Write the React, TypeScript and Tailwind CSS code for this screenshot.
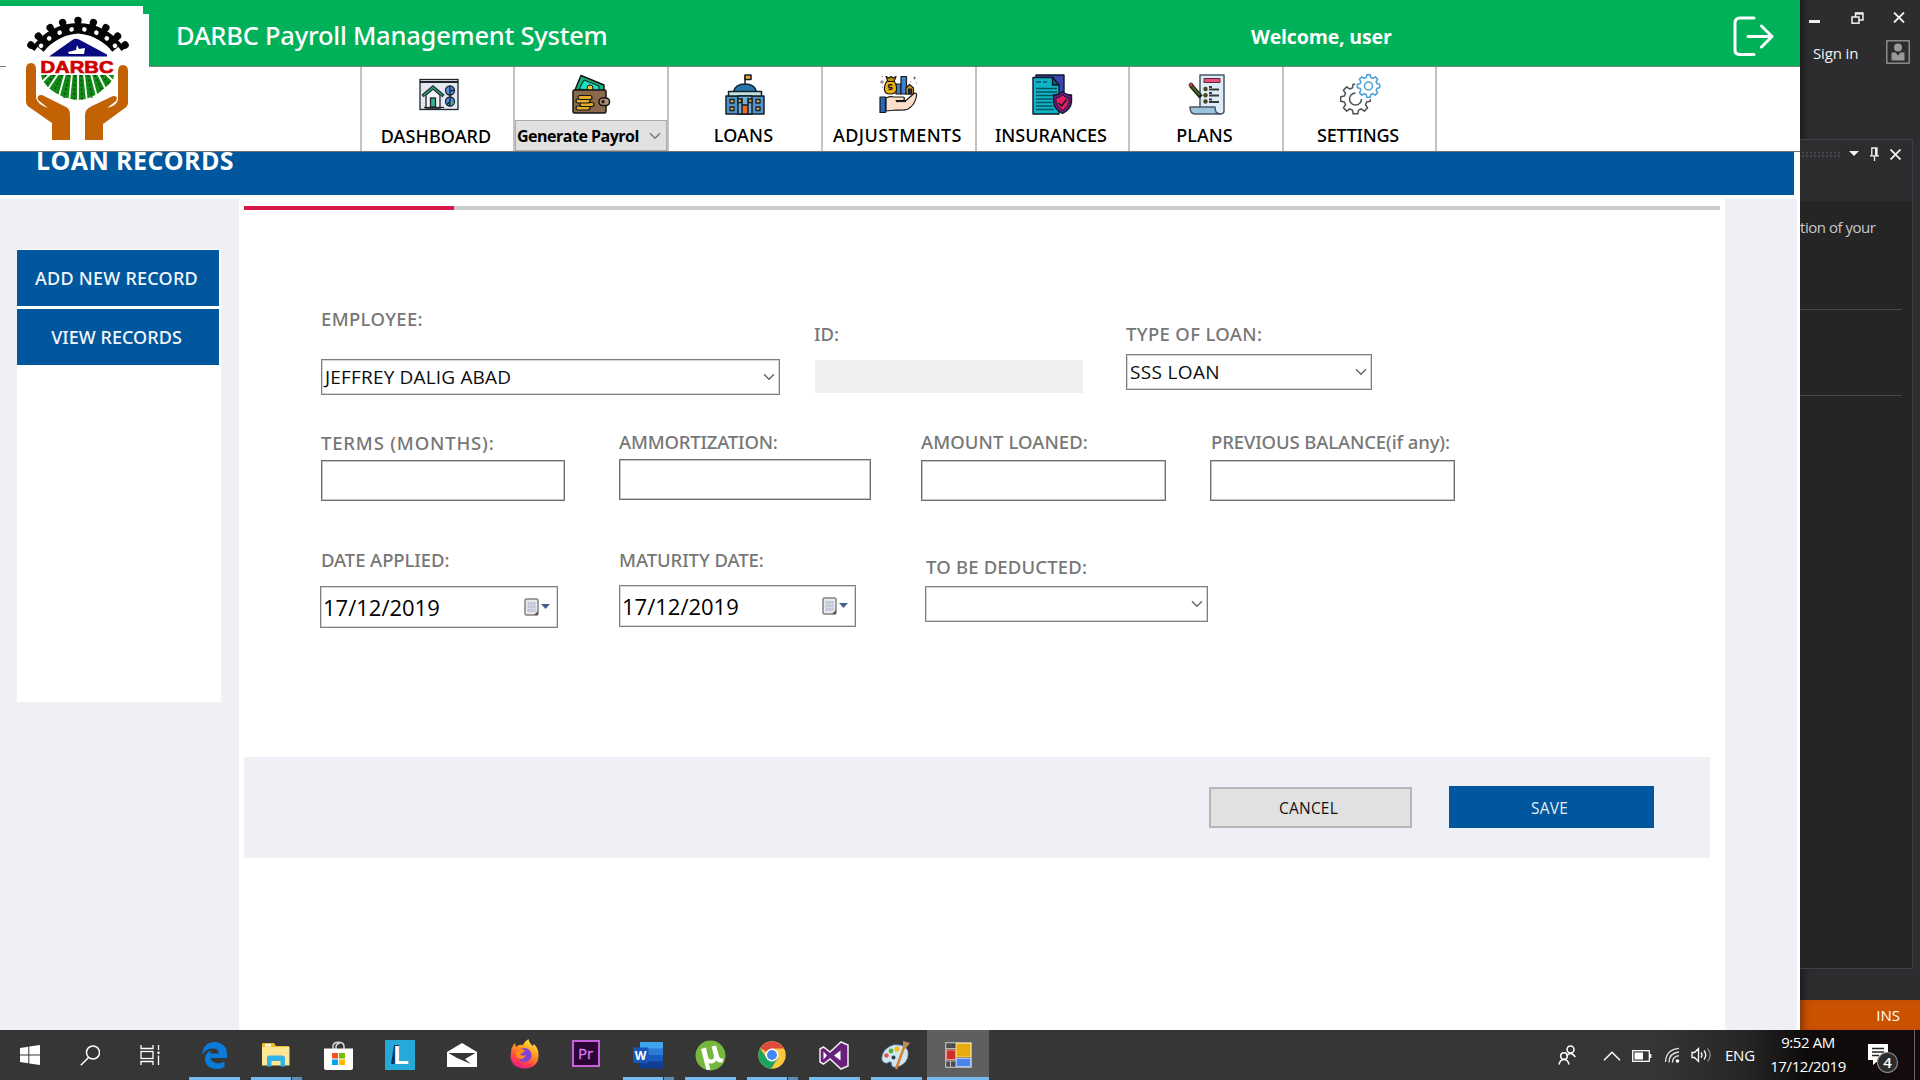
import type { ReactNode } from "react";

const BLUE = "bg-[#00579d]";

function Logo() {
  const teeth = [-55, -43.5, -29, -15.5, 0, 15.5, 29, 43.5, 55];
  return (
    <svg width="104" height="126" viewBox="0 0 104 126">
      <path d="M13 34 A49.500 49.500 0 0 1 91 34" fill="none" stroke="#050505" strokeWidth="12" />
      {teeth.map((a) => (
        <g key={a} transform={`rotate(${a} 52 64)`}>
          <rect x="49.200" y="5" width="5.600" height="8" fill="#050505" />
          <circle cx="52" cy="6.500" r="3.700" fill="#050505" />
        </g>
      ))}
      {[-49, -36, -22, -7.5, 7.5, 22, 36, 49].map((a) => (
        <circle key={a} cx="52" cy="15" r="2.300" fill="#fff" transform={`rotate(${a} 52 64)`} />
      ))}
      <path d="M18 46 Q24 22 52 19.500 Q80 22 86 46 Z" fill="#fff" />
      <path d="M23 42.500 L47 25.500 Q50 24 53 25.500 L81 40.500 V42.500 Z" fill="#0a0a80" />
      <path d="M51 31 l2 4 6-1 -1 6 -15 0 -1-2 8-2z" fill="#fff" />
      <text x="14.500" y="58.500" fontFamily="Liberation Sans" fontWeight="700" fontSize="16.500" textLength="73" lengthAdjust="spacingAndGlyphs" fill="#d00000" stroke="#d00000" strokeWidth=".7">DARBC</text>
      <path d="M15 61 H88 Q88 66 80 73 Q66 86 52 86 Q36 85 24 75 Q16 68 15 61Z" fill="#128a17" />
      <g stroke="#fff" strokeWidth="1.800" fill="none">
        <path d="M24 60 L16 68 M32 60 L22 75 M39 60 L33 82 M46 60 L43 88 M52 60 V88 M58 60 L61 88 M65 60 L71 83 M72 60 L80 76 M80 60 L89 69" />
      </g>
      <g stroke="#063d08" strokeWidth="1.200" strokeDasharray="2 2.500" fill="none">
        <path d="M20 61 l-2 3 M28 61 L20 71 M36 61 L28 77 M43 61 L38 84 M49 61 L48 86 M55 61 L56 86 M62 61 L66 84 M69 61 L76 77 M76 61 L84 71" />
      </g>
      <g fill="#c26205">
        <path d="M0 55 Q0 49 5 49 Q10 49 10 55 V84 Q12 91 22 94 L12 86 Q10 81 16 81 L38 92 Q44 94 44 100 V126 H26 V109 L3 93 Q0 91 0 87 Z" />
        <path d="M102 57 Q102 51 97 51 Q92 51 92 57 V86 Q90 92 81 94 L90 87 Q93 82 87 82 L66 92 Q59 95 59 101 V126 H77 V110 L99 94 Q102 92 102 88 Z" />
      </g>
    </svg>
  );
}

function DashboardIcon() {
  return (
    <svg width="40" height="41" viewBox="0 0 40 41" stroke="#20242c" strokeWidth="1.300">
      <rect x="1" y="5.500" width="38" height="30" fill="#e4e8f0" />
      <path d="M1 8 H39" strokeWidth="1.800" />
      <path d="M7 34 V21 L14 15 L21 21 V34 Z" fill="#f1f3f7" />
      <path d="M3.500 22 L14 13 L24.500 22" fill="none" strokeWidth="3.200" />
      <path d="M4.500 21.500 L14 13.500 L23.500 21.500" fill="none" stroke="#2fa67c" strokeWidth="1.400" />
      <rect x="11.500" y="24" width="5" height="9" fill="#2fb58a" />
      <path d="M5 33.500 H25" />
      <circle cx="31" cy="16.500" r="4.500" fill="#4a8fe0" />
      <circle cx="31" cy="27.500" r="4.500" fill="#4a8fe0" />
      <path d="M31 12 V32 M31 16.500 H35.500 M31 27.500 L28 30.500" />
      <path d="M31.500 28 h3.500 a4 4 0 0 1 -3 3.500z" fill="#2fb58a" stroke="none" />
    </svg>
  );
}

function WalletIcon() {
  return (
    <svg width="40" height="41" viewBox="0 0 40 41" stroke="#151515" strokeWidth="1.500" strokeLinejoin="round">
      <path d="M4 16 L10 1.500 L33 11 V17 Z" fill="#13b57f" />
      <path d="M8 15 L13 6 L28 12 V17 Z" fill="#19e0c5" strokeWidth="1" />
      <circle cx="19" cy="14" r="3" fill="#f5c02e" strokeWidth="1" />
      <rect x="2" y="16" width="33" height="23" rx="1.500" fill="#8a6a4b" />
      <rect x="28" y="24" width="10.500" height="7.500" rx="3.500" fill="#b08f72" />
      <circle cx="32" cy="27.700" r="1" fill="#eee" />
      <g fill="#e3aa2b" strokeWidth="1.200">
        <rect x="5" y="32" width="14" height="4" rx="2" />
        <rect x="9" y="28.500" width="14" height="4" rx="2" />
        <rect x="5" y="25" width="14" height="4" rx="2" />
        <rect x="7" y="21.500" width="14" height="4" rx="2" />
      </g>
    </svg>
  );
}

function LoansIcon() {
  return (
    <svg width="40" height="41" viewBox="0 0 40 41" stroke="#14202c" strokeWidth="1.500" strokeLinejoin="round">
      <path d="M20 11 V1.500" />
      <rect x="20" y="1" width="6" height="4.500" fill="#f0a72c" />
      <path d="M8.500 18 Q10 10 20 10 Q30 10 31.500 18 Z" fill="#2676ad" />
      <rect x="1" y="22" width="38" height="18" fill="#5493c7" />
      <rect x="3.500" y="17.500" width="33" height="4.500" fill="#bfe2df" />
      <rect x="13" y="22" width="14" height="18" fill="#74add6" />
      <path d="M17 24 V31 M23 24 V31" />
      <rect x="17" y="31" width="6" height="9" fill="#ef6b2a" />
      <g fill="#f4b53a" strokeWidth="1.300">
        <rect x="5" y="25.500" width="4" height="3.500" /><rect x="31" y="25.500" width="4" height="3.500" />
        <rect x="5" y="33" width="4" height="3.500" /><rect x="31" y="33" width="4" height="3.500" />
        <rect x="13" y="25" width="3.500" height="3.500" /><rect x="23.500" y="25" width="3.500" height="3.500" />
      </g>
    </svg>
  );
}

function AdjustmentsIcon() {
  return (
    <svg width="40" height="41" viewBox="0 0 40 41" stroke="#1a1a1a" strokeWidth="1.200" strokeLinejoin="round">
      <rect x="17" y="10" width="5" height="10" fill="#3d7fd0" />
      <rect x="22" y="2.500" width="5.500" height="17.500" fill="#3d7fd0" />
      <path d="M8 7 Q5 11 5.500 16 Q6 20 11 20 Q17 20 17.500 16 Q18 11 15 7 Z" fill="#eab010" />
      <path d="M7 2.500 l3 1.500 2-1.500 2 1.500 3-1.500 -2 5 H9z" fill="#c8900b" />
      <path d="M13.500 11 q-4-1 -4 1 t3 1.500 q2 2 -3 2" fill="none" strokeWidth="1.400" />
      <path d="M27 14 L30.500 10.500 L34.500 14 V20 H27z" fill="#d79a25" />
      <rect x="29.500" y="15" width="3" height="5" fill="#303030" />
      <path d="M7 24 Q11 22 15 23 H24 Q27 24 24 26.500 H17 H27 L35 19.500 Q38 18 37.500 22 Q36 31 29 35 Q26 36.500 17 36 L7 37 Z" fill="#fddfcc" />
      <path d="M17 27.500 H27" />
      <rect x="1" y="23" width="5.500" height="15.500" fill="#2a68b3" />
      <g stroke="#777" strokeWidth="1"><path d="M1 8 h4 M3 6 v4 M34 4 h3 M35.500 2.500 v3 M3 2.500 h1 M37 9 h1 M31 8 h1 M3 13 h1" /></g>
    </svg>
  );
}

function InsurancesIcon() {
  return (
    <svg width="41" height="41" viewBox="0 0 41 41" stroke="#0d1a26" strokeWidth="1.400" strokeLinejoin="round">
      <path d="M4 4 V1 H32 V30 H20Z" fill="#3a45ae" />
      <path d="M1 3.500 H20.500 L27 11 V40 H1 Z" fill="#0fb4c9" />
      <path d="M20.500 3.500 V11 H27 Z" fill="#12647d" />
      <path d="M4 8 h5 M11 8 h4 M4 14.500 h21 M4 18 h21 M4 21.500 h18 M4 25 h16 M4 28.500 h16 M4 32 h17 M4 35.500 h18" stroke="#0a5360" strokeWidth="1.500" />
      <path d="M30.500 17.500 Q34 21 39.500 21 V28 Q39 35 30.500 39.500 Q22 35 21.500 28 V21 Q27 21 30.500 17.500Z" fill="#6d1b86" />
      <path d="M30.500 21 Q33 23.500 37 24 V28 Q36 33 30.500 36.500 Q25 33 24 28 V24 Q28 23.500 30.500 21Z" fill="#ec1c64" strokeWidth="1" />
      <path d="M26.500 29 L29.500 32 L35 25" fill="none" strokeWidth="1.500" />
    </svg>
  );
}

function PlansIcon() {
  return (
    <svg width="40" height="41" viewBox="0 0 40 41" stroke="#4b5563" strokeWidth="1.500" strokeLinejoin="round">
      <path d="M13 1 H37 V37 Q37 40 33 40 L13 35 Z" fill="#dcecf9" />
      <path d="M3 33 H28 Q28 40 33 40 H8 Q3 40 3 33Z" fill="#9cc4e0" />
      <rect x="17" y="4.500" width="16" height="4" fill="#ef5083" stroke="#60263b" strokeWidth="1" />
      <g stroke="#3b3b3b" strokeWidth="1.800"><path d="M22 15.500 h10 M22 21.500 h10 M22 28 h10 M22 13 h3 M22 19 h3 M22 25.500 h3" /></g>
      <g fill="#4d421c" stroke="none"><circle cx="18.500" cy="15" r="2.200" /><circle cx="18.500" cy="21.200" r="2.200" /><circle cx="18.500" cy="27.500" r="2.200" /></g>
      <path d="M4 11.500 L14 23" stroke="#1e2a12" strokeWidth="4.500" />
      <path d="M5 12.500 L12.500 21" stroke="#44652a" strokeWidth="2" />
      <circle cx="4" cy="11" r="2" fill="#d33f63" stroke="#3d1420" strokeWidth=".8" />
    </svg>
  );
}

function gearPath(cx: number, cy: number, inner: number, outer: number, n: number) {
  const out: string[] = [];
  const step = (Math.PI * 2) / n;
  const offsets: [number, number][] = [[-0.34, inner], [-0.2, outer], [0.2, outer], [0.34, inner]];
  for (let i = 0; i < n; i++) {
    for (const [d, r] of offsets) {
      const a = i * step + d * step;
      out.push(`${(cx + r * Math.sin(a)).toFixed(2)} ${(cy - r * Math.cos(a)).toFixed(2)}`);
    }
  }
  return `M${out.join("L")}Z`;
}

function SettingsIcon() {
  return (
    <svg width="41" height="41" viewBox="0 0 41 41" fill="none" strokeWidth="1.500" strokeLinejoin="round">
      <path d={gearPath(15.5, 25, 11.5, 15, 8)} stroke="#4e5055" />
      <path d="M15.500 19 a6 6 0 1 0 6 6" stroke="#4e5055" />
      <circle cx="28" cy="12.500" r="13" fill="#fff" />
      <path d={gearPath(28.5, 12, 8.8, 11.3, 8)} stroke="#4a9ed6" />
      <circle cx="28.500" cy="12" r="4" stroke="#4a9ed6" />
    </svg>
  );
}

function Chevron({ w = 12, color = "#666" }: { w?: number; color?: string }) {
  return (
    <svg width={w} height="8" viewBox="0 0 12 8" fill="none" stroke={color} strokeWidth="1.400" preserveAspectRatio="none">
      <path d="M1 1.300 L6 6.300 L11 1.300" />
    </svg>
  );
}

function NavCell({ icon, label, tracking, width, iconPad = "pl-[3px]", gap = "mt-[8px]" }: { icon: ReactNode; label: string; tracking: string; width: string; iconPad?: string; gap?: string }) {
  return (
    <div className={`flex h-[84px] shrink-0 flex-col items-center border-l-2 border-[#c3c3c3] pt-[7px] pr-[3px] ${width}`}>
      <div className={iconPad}>{icon}</div>
      <span className={`font-['Noto_Sans',sans-serif] text-[18px] leading-6 font-medium whitespace-nowrap text-black ${gap} ${tracking}`}>{label}</span>
    </div>
  );
}

function Field({ label, tracking, className, children, gap }: { label: string; tracking: string; className: string; gap: string; children: ReactNode }) {
  return (
    <div className={`flex shrink-0 flex-col items-start ${className}`}>
      <label className={`ml-px h-6 whitespace-nowrap font-['Noto_Sans',sans-serif] text-[18.500px] leading-6 font-medium text-[#777] ${tracking} ${gap}`}>{label}</label>
      {children}
    </div>
  );
}

function SelectBox({ className, value = "", tracking = "" }: { className: string; value?: string; tracking?: string }) {
  return (
    <div className={`flex items-center justify-between border border-[#7e7e7e] bg-white pr-[4px] pl-[3px] outline outline-1 -outline-offset-2 outline-[#d6d6d6] ${className}`}>
      <span className={`-mt-px whitespace-nowrap text-[19px] leading-6 text-[#0c0c0c] ${tracking}`}>{value}</span>
      <Chevron />
    </div>
  );
}

function TextBox({ className }: { className: string }) {
  return <div className={`border border-[#6e6e6e] bg-white outline outline-1 -outline-offset-2 outline-[#c4c4c4] ${className}`} />;
}

function DateBox({ className }: { className: string }) {
  return (
    <div className={`flex h-[42px] items-center border border-[#7e7e7e] bg-white pr-[6px] pl-[2px] outline outline-1 -outline-offset-2 outline-[#d6d6d6] ${className}`}>
      <span className="flex-1 text-[22px] leading-7 text-black">17/12/2019</span>
      <svg width="27" height="18" viewBox="0 0 27 18" className="-mt-px">
        <rect x="1" y="1" width="13" height="16" rx="1.500" fill="#e9e9ec" stroke="#85817f" strokeWidth="1.500" />
        <rect x="3.500" y="4" width="8" height="10" fill="#bcc4d6" />
        <path d="M3.500 7h8M3.500 10.500h8M6 4v10M9 4v10" stroke="#e6eaf2" strokeWidth=".6" />
        <path d="M10 17 L14 13 V17Z" fill="#555" />
        <path d="M17 6 H26 L21.500 11Z" fill="#44608f" />
      </svg>
    </div>
  );
}

function Slot({ children, w = "w-[62px]", line = "", active = false }: { children: ReactNode; w?: string; line?: "" | "full" | "split" | "wide"; active?: boolean }) {
  return (
    <div className={`flex h-[50px] shrink-0 flex-col items-center ${w} ${active ? "bg-[#5f5f5f]" : ""}`}>
      <div className="flex h-[47px] items-center justify-center pt-[3px]">{children}</div>
      {line === "full" && <div className="h-[3px] w-[51px] bg-[#76b9ed]" />}
      {line === "wide" && <div className="h-[3px] w-full bg-[#76b9ed]" />}
      {line === "split" && (
        <div className="flex h-[3px] w-[51px] gap-px">
          <div className="w-10 bg-[#76b9ed]" />
          <div className="flex-1 bg-[#5b8db8]" />
        </div>
      )}
    </div>
  );
}

function Taskbar() {
  return (
    <footer className="flex h-[50px] w-full shrink-0 bg-[linear-gradient(90deg,#363636_0%,#363636_86%,#262525_91%,#0e0b0b_94%,#140b0c_100%)]">
      <Slot w="w-[60px]">
        <svg width="20" height="20" viewBox="0 0 20 20" fill="#fff"><path d="M0 3 L8.300 1.800 V9.500 H0Z M9.300 1.600 L20 0 V9.500 H9.300Z M0 10.500 H8.300 V18.200 L0 17Z M9.300 10.500 H20 V20 L9.300 18.400Z" /></svg>
      </Slot>
      <Slot w="w-[60px]">
        <svg width="20" height="21" viewBox="0 0 20 21" fill="none" stroke="#fff" strokeWidth="1.500"><circle cx="13" cy="7.500" r="6.500" /><path d="M8.500 12.500 L.8 20.200" /></svg>
      </Slot>
      <Slot w="w-[60px]">
        <svg width="20" height="20" viewBox="0 0 20 20" fill="none" stroke="#fff" strokeWidth="1.300"><path d="M1 0 V3.500 H13 V0 M1 20 V16.500 H13 V20 M18.500 0 V5 M18.500 10.500 V20" /><rect x="1" y="6.500" width="12" height="7" /><rect x="17.500" y="6.500" width="2" height="2.500" fill="#fff" stroke="none" /></svg>
      </Slot>
      <div className="w-[3px] shrink-0" />
      <Slot line="full">
        <svg width="25" height="27" viewBox="0 0 25 27"><path d="M0 12.500 C1 4 6 0 13 0 C21 0 25 6 25 12 V16 H8.500 C9 21 17 23 22.500 19.500 V25 C15 29 3 27 3 17 C3 12.500 6 9.500 9.500 8 C8.500 9.500 8.300 11 8.300 11.500 H17 C17 5 6 4 0 12.500Z" fill="#0a7bd8" /></svg>
      </Slot>
      <Slot line="split">
        <svg width="28" height="24" viewBox="0 0 28 24"><path d="M0 1 Q0 0 1 0 H12 L14 3 H27 V7 H0Z" fill="#f0b92f" /><rect x="3" y="1.200" width="6" height="2.200" fill="#fff" /><rect y="4" width="27.500" height="18.500" fill="#ffe694" /><path d="M5 23.500 V15 Q5 12.500 7.500 12.500 H20 Q23 12.500 23 15 V23.500 H18.500 V18 H9.500 V23.500Z" fill="#34b1e5" /></svg>
      </Slot>
      <Slot>
        <svg width="29" height="29" viewBox="0 0 29 29"><path d="M9 9 V5.500 Q9 1.200 14.500 1.200 Q20 1.200 20 5.500 V9 M12 9 V6 Q12 3 16 2" fill="none" stroke="#d8d8d8" strokeWidth="1.500" /><path d="M0 7.500 H29 V27 Q29 29 27 29 H2 Q0 29 0 27Z" fill="#fff" /><rect x="8" y="12" width="6" height="5.500" fill="#f25022" /><rect x="15" y="12" width="6" height="5.500" fill="#7fba00" /><rect x="8" y="18.500" width="6" height="5.500" fill="#00a4ef" /><rect x="15" y="18.500" width="6" height="5.500" fill="#ffb900" /></svg>
      </Slot>
      <Slot>
        <svg width="30" height="30" viewBox="0 0 30 30" className="-mt-px"><rect width="30" height="30" fill="#24a9d8" /><path d="M9 5 L6 24 L12 24 L14 5Z" fill="#0a3767" /><text x="8.500" y="23.500" fontFamily="Liberation Sans" fontWeight="700" fontSize="25" fill="#fff">L</text></svg>
      </Slot>
      <Slot>
        <svg width="30" height="24" viewBox="0 0 30 24"><path d="M0 9 L15 0 L30 9 V24 H0Z" fill="#fff" /><path d="M1.500 10 L28.500 10 L18 16 L24 21 L10 15Z" fill="#363636" /></svg>
      </Slot>
      <Slot>
        <svg width="29" height="30" viewBox="0 0 29 30" className="-mt-[2px]">
          <defs><linearGradient id="fx" x1=".8" y1="0" x2=".3" y2="1"><stop offset="0" stopColor="#fff14a" /><stop offset=".4" stopColor="#ff9a1f" /><stop offset=".8" stopColor="#ff3850" /><stop offset="1" stopColor="#e3198c" /></linearGradient></defs>
          <path d="M1 14 Q1 8 5 4 L6 8 Q9 5 13 6 Q15 2 18.500 0 Q19 4 23 7 L24 5 Q29 10 28.500 17 Q28 29 14.500 29.500 Q1 29 .5 17Z" fill="url(#fx)" />
          <circle cx="14.500" cy="16" r="7" fill="#8043d8" /><path d="M6 12 Q10 9 15 11 Q14 14 10 15 Q12 18 16 16 Q13 22 8 19 Q5 16 6 12Z" fill="#ff8a1d" />
        </svg>
      </Slot>
      <Slot>
        <svg width="28" height="27" viewBox="0 0 28 27" className="-mt-[3px]"><rect x="1" y="1" width="26" height="25" fill="#2a0634" stroke="#d767f0" strokeWidth="1.800" /><text x="6" y="18.500" fontFamily="Open Sans" fontSize="15" fill="#dd7cf5" stroke="#dd7cf5" strokeWidth=".3">Pr</text></svg>
      </Slot>
      <Slot line="split">
        <svg width="30" height="27" viewBox="0 0 30 27"><rect x="7" width="23" height="7" fill="#41a5ee" /><rect x="7" y="6.500" width="23" height="7" fill="#2b7cd3" /><rect x="7" y="13" width="23" height="7" fill="#185abd" /><rect x="7" y="19.500" width="23" height="7" fill="#103f91" /><rect y="5.500" width="15.500" height="15.500" rx="1" fill="#1857b8" /><text x="1.700" y="17.800" fontFamily="Open Sans" fontWeight="700" fontSize="12" fill="#fff">W</text></svg>
      </Slot>
      <Slot line="full">
        <svg width="31" height="31" viewBox="0 0 31 31"><circle cx="15.500" cy="15.500" r="15" fill="#76b83f" /><path d="M6 9 L11 7.500 L13 17 Q14.500 21 18 19 Q19.500 18 18.500 14 L16.500 6.500 L21 5.500 L24 16 Q25 19.500 28.500 18.500 L27.500 22 Q23 23.500 21.500 20.500 Q18 25 13.500 23 L15.500 29.500 L11.500 30 Z" fill="#fff" /></svg>
      </Slot>
      <Slot line="split">
        <svg width="28" height="28" viewBox="0 0 28 28"><circle cx="14" cy="14" r="13.700" fill="#fbc940" /><path d="M14 14 L2.300 7 A13.700 13.700 0 0 1 26 7.500 H14Z" fill="#dd4b3e" /><path d="M2.100 7.200 A13.700 13.700 0 0 0 13 27.700 L20 17 L8.500 17Z" fill="#1da362" /><circle cx="14" cy="14" r="6.500" fill="#fff" /><circle cx="14" cy="14" r="5" fill="#4587f3" /></svg>
      </Slot>
      <Slot line="full">
        <svg width="30" height="29" viewBox="0 0 30 29"><path d="M1 8 L4.500 6 L11 11 L22 1 L29 4 V25 L22 28 L11 18 L4.500 23 L1 21Z" fill="#68217a" stroke="#f1ecf3" strokeWidth="1.500" /><path d="M4.500 10.500 L8 14.500 L4.500 18.500Z M15 14.500 L21.500 9.500 V19.500Z" fill="#fff" /></svg>
      </Slot>
      <Slot line="full">
        <svg width="30" height="30" viewBox="0 0 30 30"><path d="M1 18 Q2 8 13 5 Q26 4 27 13 Q27 25 14 27 Q10 27 11 23 Q9 20 6 23 Q1 23 1 18Z" fill="#cfe6f3" stroke="#8bb8d6" strokeWidth=".8" /><circle cx="5.500" cy="15.500" r="2.200" fill="#e5533d" /><circle cx="10" cy="11" r="2.400" fill="#5dab3d" /><circle cx="16" cy="9" r="2.600" fill="#f3bb1c" /><circle cx="12.500" cy="17.500" r="2" fill="#2c3d4a" /><path d="M15 29 L23.500 6" stroke="#d9822b" strokeWidth="2.500" /><path d="M22 1 L29 3 L25 8 L22 6.500Z" fill="#b98d5c" /></svg>
      </Slot>
      <Slot line="wide" active>
        <svg width="27" height="26" viewBox="0 0 27 26"><rect x=".7" y=".7" width="25.600" height="24.600" fill="#4c4c4c" stroke="#bcbcbc" strokeWidth="1.200" /><path d="M1 6.500 H11 M5.500 19 V25 M1 19 H11 M11 0 V26" stroke="#bcbcbc" /><rect x="11.500" y="1.500" width="14" height="13.500" fill="#e6ab10" stroke="#f8d568" /><rect x="1.500" y="8" width="9" height="9.500" fill="#cb3129" stroke="#f09a92" /><rect x="11.500" y="16.500" width="14" height="8" fill="#4a84ea" stroke="#a9c7ff" /></svg>
      </Slot>
      <div className="flex flex-1 items-center pt-[1px] pl-[569px]">
        <svg width="18" height="20" viewBox="0 0 18 20" fill="none" stroke="#fff" strokeWidth="1.500" className="-mt-[2px] shrink-0"><circle cx="12.500" cy="4.500" r="3.500" /><path d="M8.500 11 Q13 5.500 17.300 12" /><circle cx="6" cy="11" r="3.300" /><path d="M1 19.500 Q2 14.500 6 14.500 Q10 14.500 11 19.500" /></svg>
        <svg width="18" height="10" viewBox="0 0 18 10" fill="none" stroke="#fff" strokeWidth="1.500" className="ml-[27px] shrink-0"><path d="M1 9.300 L9 1.300 L17 9.300" /></svg>
        <svg width="20" height="12" viewBox="0 0 20 12" fill="none" stroke="#fff" strokeWidth="1.300" className="ml-[11px] shrink-0"><rect x=".7" y=".7" width="16.600" height="10.600" /><rect x="2.500" y="2.500" width="8.500" height="7" fill="#fff" stroke="none" /><path d="M18.700 4 V8" /></svg>
        <svg width="17" height="17" viewBox="0 0 17 17" fill="none" stroke="#ddd" strokeWidth="1.300" className="ml-[12px] shrink-0"><path d="M1.500 15 Q2 2.500 15 1.300 M5 15.500 Q5 6 15 5 M8.500 15.500 Q8.500 9.500 15 8.700" /><circle cx="13.500" cy="14" r="1.800" fill="#fff" stroke="none" /></svg>
        <svg width="21" height="17" viewBox="0 0 21 17" fill="none" stroke="#fff" strokeWidth="1.300" className="ml-[10px] shrink-0"><path d="M1 5.500 H3.500 L7.500 1.500 V14.500 L3.500 10.500 H1Z M10 5.500 Q12 8 10 10.500 M13 3.500 Q16.500 8 13 12.500" /><path d="M16.500 1.500 Q22 8 16.500 14.500" stroke="#888" /></svg>
        <span className="-mt-px ml-[13px] w-[35px] shrink-0 text-[15px] tracking-[-0.250px] text-white">ENG</span>
        <div className="-mt-[2px] flex w-[96px] shrink-0 flex-col items-center text-[15px] leading-[23.500px] tracking-[-0.400px] text-white">
          <span className="whitespace-nowrap">9:52 AM</span>
          <span className="whitespace-nowrap">17/12/2019</span>
        </div>
        <svg width="32" height="32" viewBox="0 0 32 32" className="mt-[3px] ml-[11px] shrink-0">
          <path d="M1 3 H21 V19 H12 L6 24 V19 H1Z" fill="#fff" />
          <path d="M5 7.500 H17 M5 11 H17 M5 14.500 H12" stroke="#222" strokeWidth="1.300" />
          <circle cx="20.500" cy="21.500" r="10" fill="#2b2b2b" stroke="#888" strokeWidth="1.200" />
          <text x="16.200" y="27" fontFamily="Open Sans" fontWeight="600" fontSize="15" fill="#fff">4</text>
        </svg>
      </div>
      <div className="mr-[5px] h-full w-px bg-[#666]" />
    </footer>
  );
}

function EditorStrip() {
  const line = "mr-[10px] h-px bg-[#48484c]";
  return (
    <aside className="flex h-[1030px] w-[120px] shrink-0 flex-col bg-[#2d2d30] shadow-[inset_8px_0_6px_-4px_rgba(0,0,0,0.35)]">
      <div className="flex h-[36px] items-start pt-[12px] pl-[9px]">
        <div className="mt-[8px] h-[3px] w-[11px] bg-[#f1f1f1]" />
        <svg width="13" height="12" viewBox="0 0 13 12" fill="none" stroke="#f1f1f1" strokeWidth="1.500" className="ml-[31px]"><rect x="1" y="5" width="7" height="6.200" /><path d="M4.500 5 V1.200 H12 V8 H8" /><path d="M4 1.500 H12" strokeWidth="2.300" /></svg>
        <svg width="12" height="11" viewBox="0 0 12 11" stroke="#f1f1f1" strokeWidth="1.800" className="ml-[29px]"><path d="M1 .5 L11 10.500 M11 .5 L1 10.500" /></svg>
      </div>
      <div className="flex h-[32px] items-center pl-[13px]">
        <span className="mt-[3px] w-[73px] text-[15px] tracking-[-0.150px] text-[#f1f1f1]">Sign in</span>
        <svg width="24" height="24" viewBox="0 0 24 24" className="-mt-px"><rect x=".8" y=".8" width="22.400" height="22.400" fill="none" stroke="#999" strokeWidth="1.300" /><circle cx="12" cy="7.500" r="4" fill="#999" /><path d="M5.500 12.500 H9.500 L12 15.500 L14.500 12.500 H18.500 V20.500 H5.500Z" fill="#999" /></svg>
      </div>
      <div className="mt-[71px] flex h-[830px] w-[113px] flex-col border-t border-r border-[#3f3f46] bg-[#252526]">
        <div className="flex h-[61px] items-start bg-[#2d2d30] pt-[7px] pl-px">
          <div className="mt-[4px] h-[7px] w-[39px] bg-[radial-gradient(#4a4a4e_0.800px,transparent_1px)] bg-[length:4px_3.500px]" />
          <svg width="10" height="5" viewBox="0 0 10 5" className="mt-[4px] ml-[9px]"><path d="M0 0 H10 L5 5Z" fill="#f1f1f1" /></svg>
          <svg width="9" height="14" viewBox="0 0 9 14" fill="none" stroke="#f1f1f1" strokeWidth="1.300" className="ml-[11px]"><path d="M1.800 8.500 V1 H7 V8.500 M0 8.800 H9 M4.500 9 V14" /><path d="M6 1 V8.500" strokeWidth="2" /></svg>
          <svg width="11" height="11" viewBox="0 0 11 11" stroke="#f1f1f1" strokeWidth="1.800" className="mt-[2px] ml-[11px]"><path d="M.5 .5 L10.500 10.500 M10.500 .5 L.5 10.500" /></svg>
        </div>
        <div className="flex h-[108px] items-start overflow-hidden pt-[14px]">
          <span className="text-[15px] leading-6 tracking-[-0.470px] whitespace-nowrap text-[#c8c8c8]">tion of your</span>
        </div>
        <div className={line} />
        <div className="h-[85px]" />
        <div className={line} />
        <div className="flex-1" />
        <div className="h-px bg-[#3f3f46]" />
      </div>
      <div className="flex-1" />
      <div className="flex h-[30px] items-center justify-end bg-[#ca5100] pr-5 text-[15px] text-white shadow-[inset_8px_0_6px_-4px_rgba(0,0,0,0.3)]">INS</div>
    </aside>
  );
}

export default function App() {
  return (
    <div className="flex h-[1080px] w-[1920px] flex-col overflow-hidden bg-white font-['Open_Sans',sans-serif]">
      <div className="flex h-[1030px]">
        <div className="flex h-[1030px] w-[1800px] shrink-0 flex-col bg-white">
          <header className="relative flex h-[67px] shrink-0 items-start border-b border-[#6f8577] bg-[#00b159]">
            <div className="absolute top-[6px] left-0 h-[140px] w-[143px] bg-white" />
            <div className="absolute top-[14px] left-0 h-[132px] w-[149px] bg-white pl-[26px]">
              <Logo />
            </div>
            <div className="absolute top-[66px] left-0 h-px w-[6px] bg-[#808080]" />
            <h1 className="mt-[17px] ml-[176px] w-[1075px] font-['Noto_Sans',sans-serif] text-[25.500px] leading-9 font-medium tracking-[-0.240px] text-white">DARBC Payroll Management System</h1>
            <p className="mt-[23px] text-[19.500px] leading-7 font-bold tracking-[-0.150px] text-white">Welcome, user</p>
            <svg width="41" height="41" viewBox="0 0 41 41" fill="none" stroke="#fff" strokeWidth="3" strokeLinecap="round" strokeLinejoin="round" className="mt-[16px] mr-[26px] ml-auto">
              <path d="M21 2 H7 Q2 2 2 7 V34 Q2 38.500 7 38.500 H21 M15 20.500 H39 M28.500 10 L39 20.500 L28.500 31" />
            </svg>
          </header>

          <nav className="flex h-[85px] shrink-0 border-b border-[#707070] bg-white pl-[360px]">
            <div className="flex w-[1077px] border-r-2 border-[#c3c3c3]">
              <NavCell width="w-[153px]" icon={<DashboardIcon />} label="DASHBOARD" tracking="tracking-[0.100px]" iconPad="pl-[5px]" gap="mt-[9px]" />
              <div className="flex h-[84px] w-[154px] shrink-0 flex-col items-center border-l-2 border-[#c3c3c3] pt-[7px]">
                <WalletIcon />
                <div className="mt-[5px] flex h-[31px] w-full items-center justify-between border border-[#ababab] bg-[#e1e1e1] pr-[5px] pl-[2px]">
                  <span className="-ml-px pt-px text-[16px] font-bold tracking-[-0.500px] whitespace-nowrap text-black">Generate Payrol</span>
                  <Chevron w={12} color="#777" />
                </div>
              </div>
              <NavCell width="w-[154px]" icon={<LoansIcon />} label="LOANS" tracking="tracking-[0.150px]" iconPad="pl-[2px]" />
              <NavCell width="w-[154px]" icon={<AdjustmentsIcon />} label="ADJUSTMENTS" tracking="tracking-[0.450px]" iconPad="pl-[2px]" />
              <NavCell width="w-[153px]" icon={<InsurancesIcon />} label="INSURANCES" tracking="tracking-[0px]" iconPad="pl-[3px]" />
              <NavCell width="w-[154px]" icon={<PlansIcon />} label="PLANS" tracking="tracking-[0.100px]" iconPad="pl-[4px]" />
              <NavCell width="w-[153px]" icon={<SettingsIcon />} label="SETTINGS" tracking="tracking-[-0.250px]" iconPad="pl-[4px]" />
            </div>
          </nav>

          <div className={`h-[43px] w-[1794px] shrink-0 overflow-hidden ${BLUE}`}>
            <h2 className="-mt-[8px] ml-[36px] text-[25px] leading-[33px] font-bold tracking-[0.400px] text-white">LOAN RECORDS</h2>
          </div>

          <div className="mt-1 flex h-[831px]">
            <aside className="w-[239px] shrink-0 bg-[#eef0f6] pt-[50px] pl-[17px]">
              <div className="h-[453px] w-[204px] bg-white pt-px">
                <button className={`block h-[56px] w-[202px] pr-[3px] font-['Noto_Sans',sans-serif] text-[18px] font-medium tracking-[0.250px] text-[#f2f6fa] ${BLUE}`}>ADD NEW RECORD</button>
                <button className={`mt-[3px] block h-[56px] w-[202px] pr-[3px] font-['Noto_Sans',sans-serif] text-[18px] font-medium tracking-[0.050px] text-[#f2f6fa] ${BLUE}`}>VIEW RECORDS</button>
              </div>
            </aside>

            <main className="flex w-[1486px] shrink-0 flex-col bg-white pl-[5px]">
              <div className="mt-[7px] h-1 w-[1476px] bg-[#cdcdcd]">
                <div className="h-1 w-[210px] bg-[#d5174a]" />
              </div>

              <form className="mt-[97px] flex h-[450px] flex-col pl-[76px]">
                <div className="flex h-[123px] items-start">
                  <Field label="EMPLOYEE:" tracking="tracking-[0.350px]" gap="mb-[28px]" className="w-[493px]">
                    <SelectBox className="ml-px h-[36px] w-[459px]" value="JEFFREY DALIG ABAD" tracking="tracking-[0.180px]" />
                  </Field>
                  <Field label="ID:" tracking="" gap="mb-[14px]" className="mt-[15px] w-[312px]">
                    <div className="ml-[2px] h-[33px] w-[268px] bg-[#efefef]" />
                  </Field>
                  <Field label="TYPE OF LOAN:" tracking="tracking-[0.350px]" gap="mb-[8px]" className="mt-[15px]">
                    <SelectBox className="ml-px h-[36px] w-[246px]" value="SSS LOAN" tracking="tracking-[0.350px]" />
                  </Field>
                </div>

                <div className="flex h-[118px] items-start">
                  <Field label="TERMS (MONTHS):" tracking="tracking-[0.820px]" gap="mb-[5px]" className="mt-px w-[298px]">
                    <TextBox className="ml-px h-[41px] w-[244px]" />
                  </Field>
                  <Field label="AMMORTIZATION:" tracking="tracking-[-0.200px]" gap="mb-[5px]" className="w-[302px]">
                    <TextBox className="ml-px h-[41px] w-[252px]" />
                  </Field>
                  <Field label="AMOUNT LOANED:" tracking="tracking-[0.080px]" gap="mb-[6px]" className="w-[290px]">
                    <TextBox className="ml-px h-[41px] w-[245px]" />
                  </Field>
                  <Field label="PREVIOUS BALANCE(if any):" tracking="tracking-[-0.120px]" gap="mb-[6px]" className="">
                    <TextBox className="h-[41px] w-[245px]" />
                  </Field>
                </div>

                <div className="flex items-start">
                  <Field label="DATE APPLIED:" tracking="tracking-[-0.080px]" gap="mb-[14px]" className="w-[298px]">
                    <DateBox className="w-[238px]" />
                  </Field>
                  <Field label="MATURITY DATE:" tracking="tracking-[-0.080px]" gap="mb-[13px]" className="w-[307px]">
                    <DateBox className="ml-px w-[237px]" />
                  </Field>
                  <Field label="TO BE DEDUCTED:" tracking="tracking-[0.180px]" gap="mb-[7px]" className="mt-[7px]">
                    <SelectBox className="h-[36px] w-[283px]" />
                  </Field>
                </div>
              </form>

              <div className="flex h-[101px] w-[1466px] items-center justify-end gap-[37px] bg-[#eef0f6] pr-[56px]">
                <button className="h-[41px] w-[203px] border-2 border-[#b6b6b8] bg-[#e1e1e1] pt-[2px] pr-[4px] text-[15.500px] tracking-[0.200px] text-[#111]">CANCEL</button>
                <button className={`-mt-px h-[42px] w-[205px] pt-[3px] pr-[4px] text-[15.500px] tracking-[0.200px] text-[#e6eef6] ${BLUE}`}>SAVE</button>
              </div>
            </main>

            <div className="w-[72px] shrink-0 bg-[#eef0f6]" />
          </div>
        </div>

        <EditorStrip />
      </div>
      <Taskbar />
    </div>
  );
}
